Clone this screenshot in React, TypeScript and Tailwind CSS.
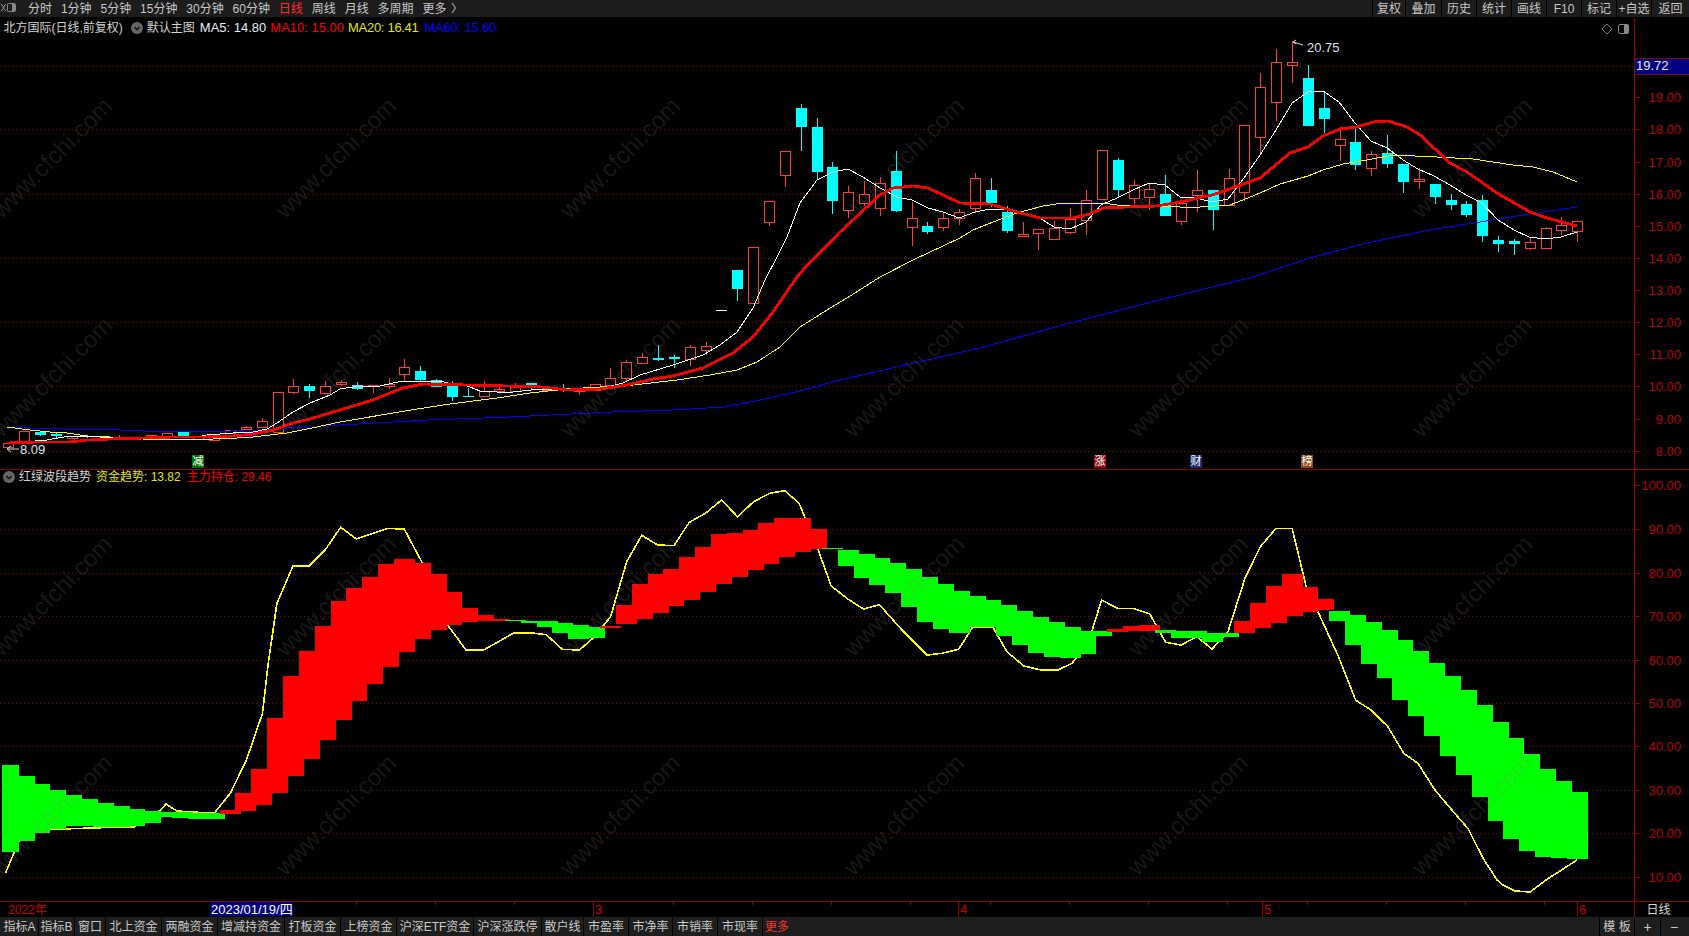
import React from "react";

const FONT = "font-['Liberation_Sans','Noto_Sans_CJK_SC',sans-serif]";

const topLeft = ["分时", "1分钟", "5分钟", "15分钟", "30分钟", "60分钟", "日线", "周线", "月线", "多周期", "更多"];
const topRight = [
    { label: "复权", w: "w-[33px]" },
    { label: "叠加", w: "w-[36px]" },
    { label: "历史", w: "w-[35px]" },
    { label: "统计", w: "w-[35px]" },
    { label: "画线", w: "w-[35px]" },
    { label: "F10", w: "w-[35px]" },
    { label: "标记", w: "w-[35px]" },
    { label: "+自选", w: "w-[35px]" },
    { label: "返回", w: "w-[38px]" },
];
const bottomTabs = [
    { label: "指标A", w: "w-[38px]" },
    { label: "指标B", w: "w-[36px]" },
    { label: "窗口", w: "w-[31px]" },
    { label: "北上资金", w: "w-[56px]" },
    { label: "两融资金", w: "w-[56px]" },
    { label: "增减持资金", w: "w-[67px]" },
    { label: "打板资金", w: "w-[56px]" },
    { label: "上榜资金", w: "w-[56px]" },
    { label: "沪深ETF资金", w: "w-[77px]" },
    { label: "沪深涨跌停", w: "w-[68px]" },
    { label: "散户线", w: "w-[42px]" },
    { label: "市盈率", w: "w-[45px]" },
    { label: "市净率", w: "w-[44px]" },
    { label: "市销率", w: "w-[45px]" },
    { label: "市现率", w: "w-[45px]" },
];

const cx = (i: number) => 8.15 + 15.85 * i;

// top, bottom, high, low, colour
type Candle = [number, number, number, number, "r" | "c" | "w"];
const candles: Candle[] = [
    [443, 447, 443, 447, "r"], [431, 441, 431, 441, "r"], [432, 435, 431, 436, "c"], [434, 436, 433, 438, "c"],
    [436, 438, 436, 438, "r"], [436, 437, 435, 438, "c"], [438, 439, 437, 440, "c"], [437, 438, 435, 439, "r"],
    [437, 439, 437, 439, "r"], [435, 438, 435, 439, "r"], [433, 436, 433, 437, "r"], [432, 436, 432, 438, "c"],
    [437, 439, 437, 439, "r"], [437, 440, 436, 441, "r"], [430, 433, 430, 434, "r"], [427, 429, 426, 429, "r"],
    [421, 427, 418, 427, "r"], [392, 432, 392, 432, "r"], [386, 392, 379, 394, "r"], [386, 391, 384, 398, "c"],
    [386, 393, 381, 393, "r"], [382, 384, 380, 386, "r"], [385, 389, 382, 390, "c"], [385, 386, 385, 393, "r"],
    [384, 386, 378, 389, "r"], [367, 374, 359, 382, "r"], [371, 380, 366, 381, "c"], [380, 387, 379, 387, "c"],
    [386, 397, 381, 401, "c"], [396, 397, 388, 397, "c"], [391, 396, 381, 396, "r"], [389, 391, 387, 392, "r"],
    [386, 391, 383, 392, "r"], [383, 386, 383, 390, "c"], [388, 390, 387, 390, "r"], [388, 389, 384, 392, "c"],
    [390, 391, 390, 395, "r"], [384, 390, 384, 390, "r"], [378, 385, 368, 386, "r"], [362, 378, 360, 381, "r"],
    [357, 363, 353, 364, "r"], [358, 360, 345, 361, "c"], [357, 359, 355, 368, "c"], [347, 359, 345, 366, "r"],
    [346, 350, 342, 355, "r"], [310, 311, 310, 311, "w"], [270, 289, 270, 301, "c"], [247, 303, 247, 303, "r"],
    [201, 222, 201, 226, "r"], [151, 175, 151, 187, "r"], [108, 127, 104, 151, "c"], [127, 172, 118, 180, "c"],
    [167, 201, 162, 214, "c"], [192, 210, 186, 218, "r"], [194, 203, 181, 206, "r"], [183, 208, 177, 216, "r"],
    [171, 211, 151, 212, "c"], [218, 227, 202, 246, "r"], [226, 232, 222, 234, "c"], [218, 227, 213, 231, "r"],
    [212, 218, 209, 225, "r"], [178, 208, 173, 213, "r"], [190, 203, 178, 207, "c"], [212, 231, 206, 233, "c"],
    [234, 236, 222, 237, "r"], [229, 233, 229, 250, "r"], [228, 239, 221, 239, "r"], [219, 232, 208, 234, "r"],
    [200, 220, 190, 235, "r"], [150, 199, 150, 199, "r"], [160, 190, 158, 198, "c"], [185, 198, 180, 204, "r"],
    [189, 197, 184, 210, "r"], [194, 216, 175, 216, "c"], [203, 221, 200, 225, "r"], [190, 195, 170, 212, "r"],
    [190, 210, 190, 230, "c"], [178, 205, 169, 205, "r"], [125, 192, 125, 201, "r"], [87, 137, 73, 155, "r"],
    [62, 102, 49, 121, "r"], [62, 65, 41, 83, "r"], [78, 126, 65, 126, "c"], [108, 119, 92, 133, "c"],
    [139, 145, 127, 161, "r"], [142, 165, 128, 170, "c"], [154, 168, 151, 176, "r"], [153, 164, 135, 168, "c"],
    [164, 182, 164, 193, "c"], [179, 181, 168, 189, "r"], [184, 197, 184, 204, "c"], [200, 205, 194, 210, "c"],
    [204, 215, 201, 217, "c"], [200, 236, 195, 242, "c"], [240, 244, 236, 252, "c"], [241, 244, 239, 255, "c"],
    [242, 248, 237, 250, "r"], [228, 248, 227, 248, "r"], [225, 230, 217, 235, "r"], [221, 231, 221, 242, "r"],
];

const ma5 = "35,441 47,440 58,438 70,436 83,436 100,437 127,438 143,438 157,437 177,437 197,437 207,435 220,434 233,433 253,432 267,429 277,423 293,412 310,403 330,395 340,389 353,387 380,386 393,383 403,381 440,381 448,383 465,385 480,391 497,392 513,392 540,389 560,389 587,389 603,388 623,383 640,375 673,365 703,355 720,345 737,332 753,308 765,280 777,257 787,237 800,203 817,180 833,172 848,169 863,177 880,188 897,197 912,200 928,208 943,212 959,218 975,212 990,209 1006,209 1022,213 1038,217 1054,227 1070,229 1086,222 1101,205 1117,198 1133,190 1149,183 1165,185 1180,197 1196,198 1212,202 1228,199 1244,178 1260,155 1276,130 1292,103 1308,92 1323,91 1339,102 1355,123 1371,141 1387,148 1403,160 1418,169 1434,176 1450,185 1466,195 1482,203 1498,220 1514,230 1529,237 1545,239 1561,237 1577,232";
const ma10 = "7,443 37,442 70,442 88,440 110,439 143,438 173,437 203,437 233,436 253,434 273,430 293,423 310,419 340,410 373,400 403,388 423,384 467,385 507,386 543,387 567,390 600,389 627,385 653,379 673,376 703,368 733,353 753,337 773,312 797,277 803,270 840,232 880,195 893,188 913,186 928,188 960,203 990,204 1017,212 1040,218 1073,218 1090,214 1103,208 1127,207 1157,206 1180,202 1212,195 1227,190 1260,178 1290,153 1308,147 1323,136 1340,129 1357,127 1373,122 1388,121 1407,127 1420,135 1450,163 1467,172 1497,193 1530,212 1547,218 1577,226";
const ma20 = "7,427 30,430 50,432 67,433 87,436 110,437 143,439 170,439 213,439 237,438 253,437 287,433 312,428 340,422 417,409 450,404 497,398 530,393 567,389 600,387 633,385 677,380 710,375 737,370 757,362 780,347 800,327 827,310 847,298 880,277 913,260 960,238 973,230 993,222 1017,213 1043,206 1063,203 1103,203 1117,205 1180,207 1200,207 1230,205 1243,200 1260,193 1280,184 1308,176 1323,170 1343,164 1367,160 1393,155 1437,157 1473,159 1513,165 1533,167 1553,172 1577,182";
const ma60 = "7,427 30,428 63,429 97,429 143,431 193,431 230,431 260,430 287,428 317,427 340,425 429,420 510,417 612,412 673,410 724,407 760,400 800,391 840,380 923,361 980,348 1070,323 1163,299 1180,295 1253,277 1313,257 1367,243 1430,230 1480,222 1530,214 1577,207";

// top and bottom of each band bar, read off the 3x crop (y = 480 + v / 3)
type Band = [number, number, "g" | "r"];
const bands: Band[] = [
    [855, 1115, "g"], [888, 1083, "g"], [912, 1060, "g"], [930, 1048, "g"], [945, 1038, "g"], [957, 1037, "g"],
    [968, 1042, "g"], [978, 1040, "g"], [987, 1038, "g"], [993, 1028, "g"], [995, 1012, "g"], [997, 1014, "g"],
    [999, 1017, "g"], [1000, 1017, "g"], [990, 1002, "r"], [938, 993, "r"], [867, 976, "r"], [714, 939, "r"],
    [588, 888, "r"], [513, 838, "r"], [438, 780, "r"], [363, 720, "r"], [324, 663, "r"], [291, 612, "r"],
    [251, 561, "r"], [237, 516, "r"], [249, 477, "r"], [282, 449, "r"], [336, 435, "r"], [384, 426, "r"],
    [405, 423, "r"], [417, 422, "r"], [420, 424, "g"], [423, 428, "g"], [423, 441, "g"], [429, 459, "g"],
    [435, 477, "g"], [441, 474, "g"], [437, 444, "r"], [375, 432, "r"], [312, 417, "r"], [282, 399, "r"],
    [267, 378, "r"], [231, 360, "r"], [201, 336, "r"], [162, 312, "r"], [159, 291, "r"], [150, 270, "r"],
    [129, 252, "r"], [114, 231, "r"], [114, 216, "r"], [147, 207, "r"], [205, 208, "g"], [210, 258, "g"],
    [222, 294, "g"], [234, 315, "g"], [249, 339, "g"], [267, 381, "g"], [291, 426, "g"], [312, 447, "g"],
    [333, 459, "g"], [348, 441, "g"], [360, 441, "g"], [375, 468, "g"], [393, 495, "g"], [411, 519, "g"],
    [426, 531, "g"], [441, 534, "g"], [453, 522, "g"], [453, 468, "g"], [447, 456, "r"], [437, 453, "r"],
    [435, 452, "r"], [451, 459, "g"], [453, 474, "g"], [453, 474, "g"], [459, 486, "g"], [459, 471, "g"],
    [423, 459, "r"], [369, 444, "r"], [318, 429, "r"], [282, 408, "r"], [321, 396, "r"], [357, 390, "r"],
    [393, 423, "g"], [405, 495, "g"], [426, 552, "g"], [450, 594, "g"], [480, 660, "g"], [513, 708, "g"],
    [549, 768, "g"], [588, 828, "g"], [630, 885, "g"], [675, 951, "g"], [726, 1023, "g"], [774, 1077, "g"],
    [822, 1113, "g"], [867, 1131, "g"], [903, 1134, "g"], [936, 1137, "g"],
];

const trendLeft = [[10, 1180], [35, 1085], [60, 1050], [190, 1043], [250, 1041], [300, 990], [310, 972], [330, 993], [400, 1000], [430, 940], [460, 840], [490, 700], [500, 560], [517, 370], [547, 258], [577, 258], [607, 210], [636, 142], [665, 177], [705, 155], [725, 145], [755, 148], [788, 248], [838, 440], [870, 510], [903, 510], [960, 458], [990, 458], [1020, 464], [1050, 508], [1082, 510], [1110, 470], [1140, 410], [1170, 245], [1198, 166], [1228, 195], [1258, 197], [1287, 127], [1317, 100], [1347, 60], [1377, 110], [1407, 65], [1437, 40], [1465, 32], [1492, 70]].map(([x, y]) => `${(x / 1.867).toFixed(1)},${(480 + y / 3).toFixed(1)}`);
const trendRight = [[30, 200], [55, 318], [85, 358], [112, 387], [140, 374], [180, 450], [224, 525], [250, 520], [280, 508], [305, 440], [340, 440], [365, 515], [395, 558], [425, 570], [455, 570], [480, 550], [510, 480], [532, 360], [560, 385], [590, 386], [617, 402], [645, 487], [672, 495], [700, 470], [727, 507], [755, 455], [785, 295], [812, 200], [840, 145], [868, 145], [893, 320], [915, 400], [950, 530], [980, 660], [1007, 690], [1037, 740], [1065, 820], [1090, 850], [1120, 930], [1150, 990], [1178, 1045], [1205, 1135]].map(([x, y]) => `${(800 + x / 1.764).toFixed(1)},${(480 + y / 3).toFixed(1)}`);
const trend = [...trendLeft, ...trendRight, "1497,880", "1503,885", "1515,891", "1530,892", "1546,880", "1577,860"].join(" ");

const mainGrid = [66, 129, 194, 258, 322, 386, 451];
const mainTicks = [
    ["19.00", 97], ["18.00", 129], ["17.00", 162], ["16.00", 194], ["15.00", 226], ["14.00", 258],
    ["13.00", 290], ["12.00", 322], ["11.00", 354], ["10.00", 386], ["9.00", 419], ["8.00", 451],
] as const;
const subGrid = [529, 573, 616, 660, 703, 746, 790, 833, 877];
const subTicks = [
    ["100.00", 485], ["90.00", 529], ["80.00", 573], ["70.00", 616], ["60.00", 660],
    ["50.00", 703], ["40.00", 746], ["30.00", 790], ["20.00", 833], ["10.00", 877],
] as const;

const markers = [
    { ch: "减", x: 198, bg: "#007000" },
    { ch: "涨", x: 1100, bg: "#8b1010" },
    { ch: "财", x: 1196, bg: "#1a2f70" },
    { ch: "榜", x: 1307, bg: "#8a4a10" },
];

const wmCols = [52, 336, 620, 904, 1188, 1472];
const wmRows = [158, 377, 596, 815];

const dateTicks = Array.from({ length: 16 }, (_, i) => 356 + i * 79.25);

function Chevron() {
    return (
        <svg width="12" height="12" viewBox="0 0 12 12" className="shrink-0">
            <circle cx="6" cy="6" r="6" fill="#666" />
            <path d="M3.5 5 L6 7.8 L8.5 5" fill="none" stroke="#111" strokeWidth="1.4" />
        </svg>
    );
}

function PriceChart() {
    return (
        <svg width="1634" height="451" viewBox="0 18 1634 451" className="block">
            {mainGrid.map((y) => (
                <line key={y} x1="0" x2="1634" y1={y + 0.5} y2={y + 0.5} stroke="#8b0000" strokeDasharray="1 3" shapeRendering="crispEdges" />
            ))}
            <g shapeRendering="crispEdges">
                {candles.map(([top, bottom, high, low, c], i) => {
                    const x = Math.round(cx(i));
                    if (c === "r") {
                        return (
                            <g key={i}>
                                <line x1={x + 0.5} x2={x + 0.5} y1={high} y2={low} stroke="#ff3c3c" />
                                <rect x={x - 4.5} y={top + 0.5} width="10" height={bottom - top} fill="#000" stroke="#ff3c3c" />
                            </g>
                        );
                    }
                    const color = c === "w" ? "#ffffff" : "#00ffff";
                    return (
                        <g key={i}>
                            <line x1={x + 0.5} x2={x + 0.5} y1={high} y2={low} stroke={color} />
                            <rect x={x - 5} y={top} width="11" height={bottom - top} fill={color} />
                        </g>
                    );
                })}
            </g>
            <g fill="none" shapeRendering="crispEdges">
                <polyline points={ma60} stroke="#0000ff" strokeWidth="1" />
                <polyline points={ma20} stroke="#ffff00" strokeWidth="1" />
                <polyline points={ma5} stroke="#ffffff" strokeWidth="1" />
                <polyline points={ma10} stroke="#ff0000" strokeWidth="2.8" />
            </g>
            <path d="M1303 45 L1293 42 M1296 40 L1293 42 L1296 44" fill="none" stroke="#ddd" />
            <text x="1307" y="52" fontSize="13" fill="#dfe6ee" fontFamily="Liberation Sans">20.75</text>
            <path d="M19 449 L7 449 M11 446 L7 449 L11 452" fill="none" stroke="#ddd" />
            <text x="20" y="454" fontSize="13" fill="#dfe6ee" fontFamily="Liberation Sans">8.09</text>
        </svg>
    );
}

function BandChart() {
    return (
        <svg width="1634" height="431" viewBox="0 470 1634 431" className="block">
            {subGrid.map((y) => (
                <line key={y} x1="0" x2="1634" y1={y + 0.5} y2={y + 0.5} stroke="#8b0000" strokeDasharray="1 3" shapeRendering="crispEdges" />
            ))}
            <polyline points={trend} fill="none" stroke="#ffff00" strokeWidth="1.6" shapeRendering="crispEdges" />
            <g shapeRendering="crispEdges">
                {bands.map(([top, bottom, c], i) => {
                    const left = Math.max(2, cx(i) - 10.5);
                    return (
                        <rect
                            key={i}
                            x={left}
                            y={480 + top / 3}
                            width={cx(i) + 10.5 - left}
                            height={(bottom - top) / 3}
                            fill={c === "g" ? "#00ff00" : "#ff0000"}
                        />
                    );
                })}
            </g>
        </svg>
    );
}

function PriceAxis() {
    return (
        <svg width="55" height="451" viewBox="1634 18 55 451" className="block">
            <line x1="1634.5" x2="1634.5" y1="18" y2="469" stroke="#8b0000" strokeWidth="1.5" />
            {mainTicks.map(([label, y]) => (
                <g key={label}>
                    <line x1="1634" x2="1640" y1={y + 0.5} y2={y + 0.5} stroke="#8b0000" />
                    <text x="1681" y={y + 5} textAnchor="end" fontSize="13" fill="#b40000" fontFamily="Liberation Sans">{label}</text>
                </g>
            ))}
            <rect x="1635" y="58" width="54" height="16" fill="#000080" />
            <line x1="1635" x2="1689" y1="58.5" y2="58.5" stroke="#8b0000" />
            <line x1="1635" x2="1689" y1="74.5" y2="74.5" stroke="#8b0000" />
            <text x="1636" y="69.5" fontSize="13" fill="#e8eef8" fontFamily="Liberation Sans">19.72</text>
        </svg>
    );
}

function BandAxis() {
    return (
        <svg width="55" height="431" viewBox="1634 470 55 431" className="block">
            <line x1="1634.5" x2="1634.5" y1="470" y2="901" stroke="#8b0000" strokeWidth="1.5" />
            {subTicks.map(([label, y]) => (
                <g key={label}>
                    <line x1="1634" x2="1640" y1={y + 0.5} y2={y + 0.5} stroke="#8b0000" />
                    <text x="1681" y={y + 5} textAnchor="end" fontSize="13" fill="#b40000" fontFamily="Liberation Sans">{label}</text>
                </g>
            ))}
        </svg>
    );
}

function DateAxis() {
    return (
        <svg width="1634" height="15" viewBox="0 902 1634 15" className="block">
            {dateTicks.map((x) => (
                <line key={x} x1={x} x2={x} y1="902" y2="905" stroke="#8b0000" shapeRendering="crispEdges" />
            ))}
            {[593, 958, 1262, 1577].map((x) => (
                <line key={x} x1={x + 0.5} x2={x + 0.5} y1="902" y2="917" stroke="#8b0000" shapeRendering="crispEdges" />
            ))}
            <text x="8" y="914" fontSize="12" fill="#c80000" fontFamily="Liberation Sans, Noto Sans CJK SC">2022年</text>
            <rect x="210" y="902" width="83" height="14" fill="#000080" />
            <text x="211" y="913.5" fontSize="13" fill="#fff" fontFamily="Liberation Sans, Noto Sans CJK SC">2023/01/19/四</text>
            <text x="595" y="914" fontSize="13" fill="#c80000" fontFamily="Liberation Sans">3</text>
            <text x="960" y="914" fontSize="13" fill="#c80000" fontFamily="Liberation Sans">4</text>
            <text x="1264" y="914" fontSize="13" fill="#c80000" fontFamily="Liberation Sans">5</text>
            <text x="1579" y="914" fontSize="13" fill="#c80000" fontFamily="Liberation Sans">6</text>
        </svg>
    );
}

export default function App() {
    return (
        <div className={`relative flex h-[936px] w-[1689px] flex-col overflow-hidden bg-black text-[12px] leading-none text-[#c8c8c8] ${FONT}`}>
            {/* Top toolbar */}
            <div className="flex h-[18px] shrink-0 items-stretch border-b border-black bg-[#1c1c1c]">
                <svg width="17" height="17" viewBox="0 0 17 17" className="shrink-0">
                    <path d="M1 4 L4 7.5 L1 11 M6 4 L3 7.5 L6 11" fill="none" stroke="#999" />
                    <rect x="7.5" y="3.5" width="8" height="8" rx="1" fill="none" stroke="#888" />
                    <rect x="12" y="4" width="3" height="7" fill="#888" />
                </svg>
                <div className="ml-[11px] flex items-center gap-[8.9px]">
                    {topLeft.map((t) => (
                        <span key={t} className={t === "日线" ? "text-[#ff2f2f]" : ""}>{t}</span>
                    ))}
                    <span className="-ml-[4px] text-[11px]">〉</span>
                </div>
                <div className="ml-auto flex items-stretch">
                    {topRight.map((b) => (
                        <div key={b.label} className={`flex items-center justify-center border-l border-black ${b.w}`}>{b.label}</div>
                    ))}
                </div>
            </div>

            {/* Price pane */}
            <div className="relative flex h-[451px] shrink-0">
                <PriceChart />
                <PriceAxis />
                <div className="absolute left-[3.5px] top-[3px] flex items-center text-[#d4d4d4]">
                    <span>北方国际(日线,前复权)</span>
                    <span className="ml-[8px]"><Chevron /></span>
                    <span className="ml-[4px]">默认主图</span>
                    <div className="ml-[5px] flex gap-[4px] text-[13px]">
                        <span className="text-[#e8eef8]">MA5: 14.80</span>
                        <span className="text-[#ff0000]">MA10: 15.00</span>
                        <span className="tracking-[-0.3px] text-[#e6e600]">MA20: 16.41</span>
                        <span className="ml-[2px] tracking-[-0.2px] text-[#0000ff]">MA60: 15.60</span>
                    </div>
                </div>
                <svg width="28" height="12" viewBox="0 0 28 12" className="absolute left-[1601px] top-[5px]">
                    <path d="M6 1 L11 6 L6 11 L1 6 Z" fill="none" stroke="#777" />
                    <rect x="17.5" y="1.5" width="10" height="9" rx="1.5" fill="none" stroke="#888" />
                    <rect x="23" y="2" width="4" height="8" fill="#888" />
                </svg>
                {markers.map((m) => (
                    <span
                        key={m.ch}
                        className="absolute top-[437px] flex h-[13px] w-[12px] -translate-x-1/2 items-center justify-center text-[11px] text-white"
                        style={{ left: m.x, backgroundColor: m.bg }}
                    >
                        {m.ch}
                    </span>
                ))}
            </div>

            {/* Band pane */}
            <div className="relative flex h-[432px] shrink-0 flex-wrap border-t border-[#8b0000]">
                <BandChart />
                <BandAxis />
                <div className="absolute left-[3px] top-[0px] flex h-[14px] items-center">
                    <Chevron />
                    <span className="ml-[4px] text-[#d4d4d4]">红绿波段趋势</span>
                    <span className="ml-[5px] text-[#e6e600]">资金趋势: 13.82</span>
                    <span className="ml-[6px] text-[#f00000]">主力持仓: 29.46</span>
                </div>
            </div>

            {/* Date axis */}
            <div className="flex h-[16px] shrink-0 border-t border-[#8b0000]">
                <DateAxis />
                <div className="flex w-[55px] items-center justify-center border-l border-[#8b0000] pr-[7px] text-[#d8d8d8]">日线</div>
            </div>

            {/* Bottom tabs */}
            <div className="flex h-[19px] shrink-0 items-stretch bg-[#1e1e1e] pl-[1px]">
                {bottomTabs.map((t) => (
                    <div key={t.label} className={`flex items-center justify-center border-r border-black ${t.w}`}>{t.label}</div>
                ))}
                <div className="flex w-[28px] items-center justify-center text-[#ff3030]">更多</div>
                <div className="ml-auto flex items-stretch pr-[2px]">
                    <div className="flex w-[35px] items-center justify-center border-l border-black">模 板</div>
                    <div className="flex w-[26px] items-center justify-center border-l border-black text-[14px]">+</div>
                    <div className="flex w-[27px] items-center justify-center border-l border-black text-[14px]">−</div>
                </div>
            </div>

            {/* Site watermark over everything */}
            <div className="pointer-events-none absolute inset-0">
                {wmRows.flatMap((y) =>
                    wmCols.map((x) => (
                        <span
                            key={`${x}-${y}`}
                            className="absolute -translate-x-1/2 -translate-y-1/2 -rotate-45 whitespace-nowrap text-[24px] text-[#82828230]"
                            style={{ left: x, top: y }}
                        >
                            www.cfchi.com
                        </span>
                    ))
                )}
            </div>
        </div>
    );
}
